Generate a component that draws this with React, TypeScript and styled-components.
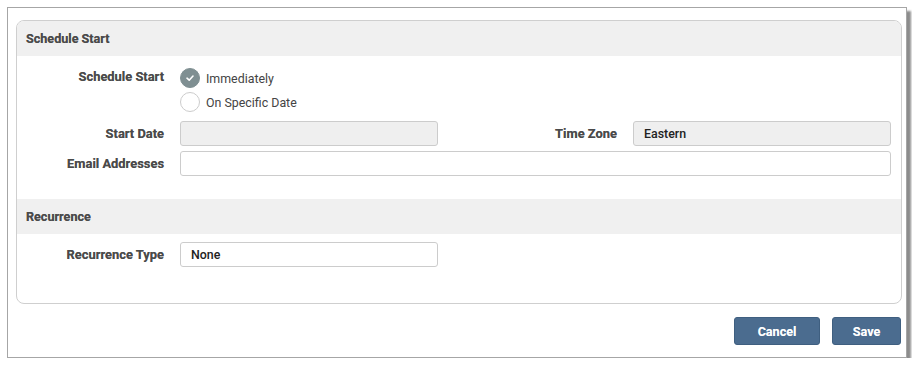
import React from "react";
import styled, { createGlobalStyle } from "styled-components";

const Global = createGlobalStyle`
  html, body { margin: 0; padding: 0; background: #ffffff; }
  body { font-family: Roboto, "Liberation Sans", Arial, sans-serif; font-size: 12px; }
  * { box-sizing: border-box; }
`;

const Page = styled.div`
  padding: 7px 0 0 7px;
`;

const Frame = styled.div`
  width: 900px;
  height: 351px;
  border: 1px solid #a6a6a6;
  background: #ffffff;
  box-shadow: 4px 4px 2px rgba(0, 0, 0, 0.45);
  padding: 12px 4px 0 8px;
  display: flex;
  flex-direction: column;
`;

const Card = styled.div`
  width: 886px;
  height: 284px;
  border: 1px solid #cfcfcf;
  border-radius: 8px;
  overflow: hidden;
  display: flex;
  flex-direction: column;
`;

const SectionHeader = styled.div`
  height: 35px;
  background: #f0f0f0;
  display: flex;
  align-items: center;
  padding-left: 9px;
  font-weight: 700;
  font-size: 12.6px;
  color: #4a4a4a;
  text-shadow: 0 0 0.6px rgba(0, 0, 0, 0.5);
`;

const FieldGrid = styled.div<{ $top: number; $bottom: number }>`
  display: grid;
  grid-template-columns: 147px 258px 163px 258px;
  column-gap: 16px;
  row-gap: 5px;
  padding: ${(p) => p.$top}px 9px ${(p) => p.$bottom}px 0;
  align-items: center;
`;

const Label = styled.div<{ $start?: boolean }>`
  text-align: right;
  font-weight: 700;
  font-size: 12.9px;
  color: #4a4a4a;
  text-shadow: 0 0 0.6px rgba(0, 0, 0, 0.5);
  align-self: ${(p) => (p.$start ? "start" : "center")};
  padding-top: ${(p) => (p.$start ? "1px" : "0")};
`;

const RadioGroup = styled.div`
  grid-column: 2 / 5;
  display: flex;
  flex-direction: column;
  gap: 4px;
  padding-bottom: 4px;
`;

const RadioRow = styled.div`
  display: flex;
  align-items: center;
  gap: 6px;
  height: 20px;
  color: #444444;
  font-size: 12.4px;
  font-weight: 400;
`;

const RadioCircle = styled.span<{ $checked?: boolean }>`
  width: 20px;
  height: 20px;
  border-radius: 50%;
  display: inline-flex;
  align-items: center;
  justify-content: center;
  background: ${(p) => (p.$checked ? "#7f8f92" : "#ffffff")};
  border: 1px solid ${(p) => (p.$checked ? "#7f8f92" : "#cccccc")};
`;

const Input = styled.div<{ $disabled?: boolean; $span?: boolean }>`
  height: 25px;
  border: 1px solid #cccccc;
  border-radius: 3px;
  background: ${(p) => (p.$disabled ? "#efefef" : "#ffffff")};
  display: flex;
  align-items: center;
  padding-left: 10px;
  font-size: 12.4px;
  font-weight: 500;
  color: #222222;
  grid-column: ${(p) => (p.$span ? "2 / 5" : "auto")};
`;

const Footer = styled.div`
  display: flex;
  justify-content: flex-end;
  gap: 12px;
  margin-top: 13px;
  padding-right: 1px;
`;

const Button = styled.button<{ $w: number }>`
  width: ${(p) => p.$w}px;
  height: 28px;
  background: #4b6c8f;
  border: 1px solid #3f5f80;
  border-radius: 3px;
  color: #ffffff;
  font-family: Roboto, "Liberation Sans", Arial, sans-serif;
  font-weight: 700;
  font-size: 12.6px;
  text-shadow: 0 0 0.6px rgba(255, 255, 255, 0.6);
  cursor: pointer;
`;

export default function App() {
  return (
    <>
      <Global />
      <Page>
        <Frame>
          <Card>
            <SectionHeader>Schedule Start</SectionHeader>
            <FieldGrid $top={12} $bottom={23}>
              <Label $start>Schedule Start</Label>
              <RadioGroup>
                <RadioRow>
                  <RadioCircle $checked>
                    <svg width="10" height="10" viewBox="0 0 10 10">
                      <path d="M2 5.2 L4.2 7.2 L8 3" fill="none" stroke="#ffffff" strokeWidth="1.6" strokeLinecap="round" strokeLinejoin="round" />
                    </svg>
                  </RadioCircle>
                  Immediately
                </RadioRow>
                <RadioRow>
                  <RadioCircle />
                  On Specific Date
                </RadioRow>
              </RadioGroup>
              <Label>Start Date</Label>
              <Input $disabled />
              <Label>Time Zone</Label>
              <Input $disabled>Eastern</Input>
              <Label>Email Addresses</Label>
              <Input $span />
            </FieldGrid>
            <SectionHeader>Recurrence</SectionHeader>
            <FieldGrid $top={8} $bottom={0}>
              <Label>Recurrence Type</Label>
              <Input>None</Input>
            </FieldGrid>
          </Card>
          <Footer>
            <Button $w={86}>Cancel</Button>
            <Button $w={69}>Save</Button>
          </Footer>
        </Frame>
      </Page>
    </>
  );
}
